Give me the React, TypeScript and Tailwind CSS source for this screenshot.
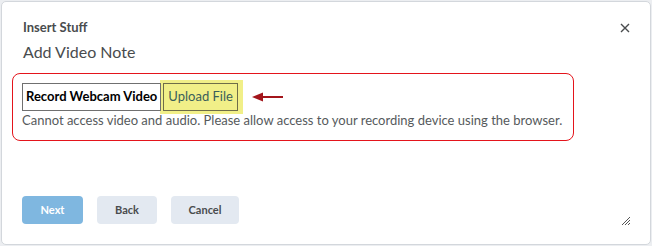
import React from 'react';

export default function App() {
    return (
        <div className="w-[652px] h-[246px] bg-[#eceef1] p-px font-['Lato',sans-serif]">
            <div className="relative w-[650px] h-[244px] bg-white border border-[#d3d7dc] rounded-[5px] pl-[10px] flex flex-col">
                {/* Header */}
                <div className="pl-[11px] pt-[17px] text-[13px] leading-[16px] font-bold text-[#494c4e]">Insert Stuff</div>
                <div className="pl-[11px] pt-[7px] text-[16px] leading-[20px] text-[#494c4e]">Add Video Note</div>

                <button className="absolute top-[20px] right-[19px] w-[12px] h-[12px] flex items-center justify-center">
                    <svg width="10" height="10" viewBox="0 0 10 10" fill="none" stroke="#494c4e" strokeWidth="1.4">
                        <path d="M1 1 L9 9 M9 1 L1 9" />
                    </svg>
                </button>

                {/* Recorder area */}
                <div className="mt-[11px] w-[562px] h-[68px] border border-[#e4141b] rounded-[8px] pl-[9px] pt-[9px]">
                    <div className="flex items-center h-[28px]">
                        <div className="relative z-10 h-[28px] border border-[#707070] px-[3px] flex items-center text-[13px] font-bold text-black">
                            Record Webcam Video
                        </div>
                        <div className="bg-[#f1ef88] h-[34px] flex items-center pl-[3px] pr-[5px] -my-[3px] -ml-px">
                            <div className="h-[28px] border border-[#6f6d48] px-[4px] flex items-center text-[13px] text-[#3a5f5a]">
                                Upload File
                            </div>
                        </div>
                        <svg className="ml-[9px]" width="32" height="10" viewBox="0 0 32 10">
                            <path d="M0 5 L11 0.5 L11 9.5 Z" fill="#a3151b" />
                            <rect x="9" y="4" width="22" height="2" fill="#a3151b" />
                        </svg>
                    </div>
                    <p className="mt-[1px] text-[13px] leading-[16px] text-[#565a5c]">
                        Cannot access video and audio. Please allow access to your recording device using the browser.
                    </p>
                </div>

                {/* Footer */}
                <div className="flex gap-[14px] pl-[10px] mt-[55px]">
                    <button className="w-[61px] h-[28px] rounded-[4px] bg-[#7fb7e0] text-white text-[11px] font-bold">Next</button>
                    <button className="w-[60px] h-[28px] rounded-[4px] bg-[#e3e9f1] text-[#494c4e] text-[11px] font-bold">Back</button>
                    <button className="w-[68px] h-[28px] rounded-[4px] bg-[#e3e9f1] text-[#494c4e] text-[11px] font-bold">Cancel</button>
                </div>

                <svg className="absolute right-[19px] bottom-[18px]" width="10" height="10" viewBox="0 0 10 10" stroke="#555" strokeWidth="1">
                    <path d="M1 9 L9 1 M4 9 L9 4 M7 9 L9 7" />
                </svg>
            </div>
        </div>
    );
}
